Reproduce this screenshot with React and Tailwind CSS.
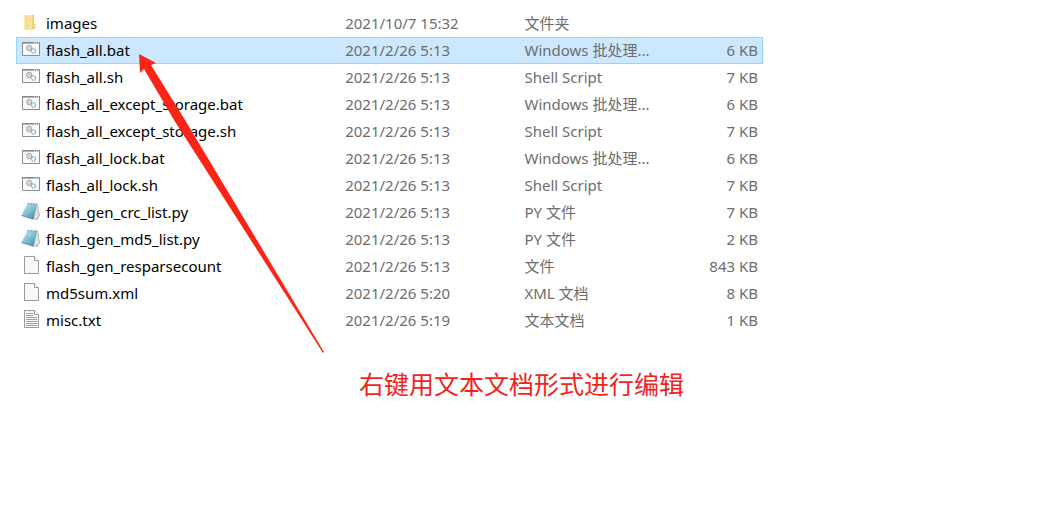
import React from "react";

const files = [
  { name: "images", date: "2021/10/7 15:32", type: "文件夹", size: "", icon: "folder" },
  { name: "flash_all.bat", date: "2021/2/26 5:13", type: "Windows 批处理...", size: "6 KB", icon: "script", selected: true },
  { name: "flash_all.sh", date: "2021/2/26 5:13", type: "Shell Script", size: "7 KB", icon: "script" },
  { name: "flash_all_except_storage.bat", date: "2021/2/26 5:13", type: "Windows 批处理...", size: "6 KB", icon: "script" },
  { name: "flash_all_except_storage.sh", date: "2021/2/26 5:13", type: "Shell Script", size: "7 KB", icon: "script" },
  { name: "flash_all_lock.bat", date: "2021/2/26 5:13", type: "Windows 批处理...", size: "6 KB", icon: "script" },
  { name: "flash_all_lock.sh", date: "2021/2/26 5:13", type: "Shell Script", size: "7 KB", icon: "script" },
  { name: "flash_gen_crc_list.py", date: "2021/2/26 5:13", type: "PY 文件", size: "7 KB", icon: "notebook" },
  { name: "flash_gen_md5_list.py", date: "2021/2/26 5:13", type: "PY 文件", size: "2 KB", icon: "notebook" },
  { name: "flash_gen_resparsecount", date: "2021/2/26 5:13", type: "文件", size: "843 KB", icon: "page" },
  { name: "md5sum.xml", date: "2021/2/26 5:20", type: "XML 文档", size: "8 KB", icon: "page" },
  { name: "misc.txt", date: "2021/2/26 5:19", type: "文本文档", size: "1 KB", icon: "text" },
];

function FolderIcon() {
  return (
    <>
      <path d="M3 3.5h5v14H3z" fill="#f3d27c" />
      <path d="M3 3.5h2v14H3z" fill="#f9e6ad" />
      <path d="M6 4l7-1.5v14L9 18l-3-1z" fill="#fae09a" />
      <path d="M11 3l2-.5v9h1.5v5L9 18.2l2-1.5z" fill="#f0cf78" />
    </>
  );
}

function ScriptIcon() {
  return (
    <>
      <path d="M1.5 3.5h17v13h-17z" fill="#f8f9fa" stroke="#8a8e92" />
      <path d="M1 3h18v1.6H1z" fill="#85898d" />
      <path d="M13 3.9h1M15 3.9h1M17 3.9h1" stroke="#fff" strokeWidth=".8" />
      <circle cx="8.2" cy="9" r="2.6" fill="#eceeef" stroke="#8d9397" strokeWidth="1.1" strokeDasharray="1.3 .5" />
      <circle cx="8.2" cy="9" r="1" fill="#fff" stroke="#9aa0a4" strokeWidth=".6" />
      <circle cx="12.4" cy="12" r="2.2" fill="#e3eff7" stroke="#86a3b7" strokeWidth="1.1" strokeDasharray="1.2 .5" />
      <circle cx="12.4" cy="12" r=".7" fill="#fff" />
    </>
  );
}

function NotebookIcon() {
  return (
    <>
      <defs>
        <linearGradient id="cover" x1="0" y1="0" x2=".8" y2="1">
          <stop offset="0" stopColor="#c4e8f0" />
          <stop offset=".5" stopColor="#86c3d3" />
          <stop offset="1" stopColor="#3c8fa9" />
        </linearGradient>
      </defs>
      <path d="M17 3l1.7 11.5L16 18.7 12 18z" fill="#9c9070" />
      <path d="M15.5 3.5l1.6.3.8 11.2-2.4 2.7-3 .2z" fill="#dfe3e2" />
      <path d="M6.5 2.5L16.5 3 12.5 18.3.5 14.5z" fill="url(#cover)" />
      <path d="M.5 14.5l12 3.8" stroke="#4d8496" strokeWidth=".8" />
      <path d="M6.5 2.5l10 .5" stroke="#829397" strokeWidth="1.4" strokeDasharray="1 .8" />
    </>
  );
}

function PageIcon({ lines }) {
  return (
    <>
      <path d="M3.5 1.5h10l4 4v13h-14z" fill="#f8f8f8" stroke="#9a9a9a" />
      <path d="M13.5 1.5v4h4" fill="#fff" stroke="#9a9a9a" />
      {lines && <path d="M5 4.5h7M5 6.5h7M5 8.5h11M5 10.5h11M5 12.5h11M5 14.5h11M5 16.5h11" stroke="#a0a0a0" />}
    </>
  );
}

function FileIcon({ kind }) {
  return (
    <svg className="mb-1 h-5 w-5 shrink-0" viewBox="0 0 20 20" fill="none" aria-hidden="true">
      {kind === "folder" && <FolderIcon />}
      {kind === "script" && <ScriptIcon />}
      {kind === "notebook" && <NotebookIcon />}
      {kind === "page" && <PageIcon />}
      {kind === "text" && <PageIcon lines />}
    </svg>
  );
}

function FileRow({ file }) {
  return (
    <tr
      aria-selected={!!file.selected}
      className={file.selected ? "bg-[#cce8ff] outline outline-1 -outline-offset-1 outline-[#99d1ff]" : ""}
    >
      <td className="p-0 pl-[5px] text-black">
        <div className="flex h-[27px] items-center gap-[5px]">
          <FileIcon kind={file.icon} />
          <span>{file.name}</span>
        </div>
      </td>
      <td className="p-0 pl-2">{file.date}</td>
      <td className="p-0 pl-2">{file.type}</td>
      <td className="p-0 pr-[5px] text-right">{file.size}</td>
    </tr>
  );
}

export default function App() {
  return (
    <main className="relative min-h-screen bg-white px-4 pt-[10px] font-['Noto_Sans','Noto_Sans_CJK_SC',sans-serif]">
      <table className="w-full max-w-[747px] table-fixed border-collapse whitespace-nowrap text-[15px] leading-[27px] text-[#6d6d6d]">
        <colgroup>
          <col className="w-[43%]" />
          <col className="w-[24%]" />
          <col className="w-[20%]" />
          <col className="w-[13%]" />
        </colgroup>
        <tbody>
          {files.map((file) => (
            <FileRow key={file.name} file={file} />
          ))}
        </tbody>
      </table>

      {/* Arrow pointing at the selected file */}
      <svg
        className="pointer-events-none absolute left-[139px] top-[54px] h-[300px] w-[186px]"
        viewBox="0 0 186 300"
        aria-hidden="true"
      >
        <path d="M0 0L17 9L12 11L46 66L185 298L184 299L35 66L5 15L1 19Z" fill="#fb2416" />
      </svg>

      <p className="mt-8 pl-[343px] text-[25px] leading-9 text-[#f5221b]">右键用文本文档形式进行编辑</p>
    </main>
  );
}
